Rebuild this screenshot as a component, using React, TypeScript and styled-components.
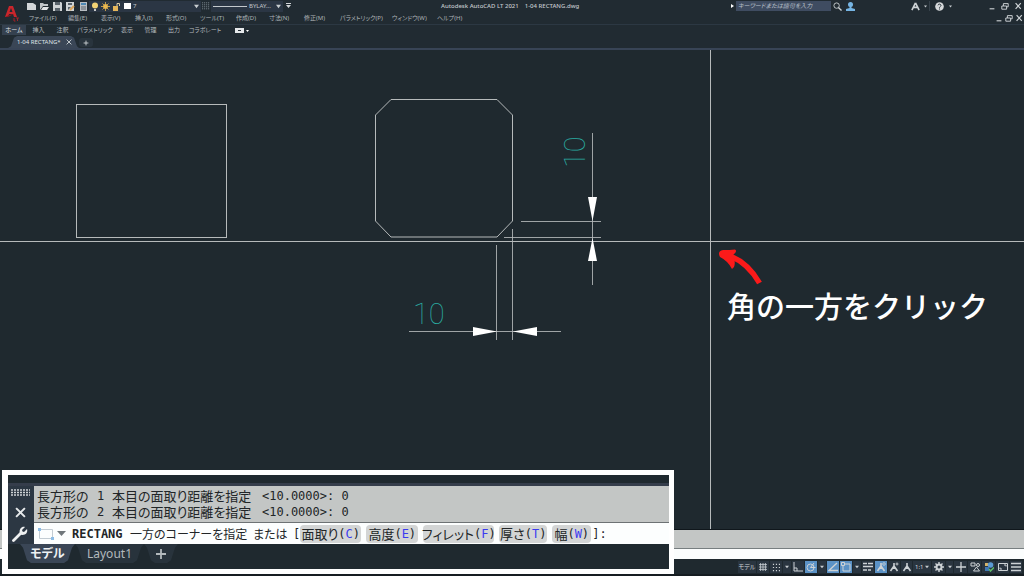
import React from 'react';
import styled, { createGlobalStyle } from 'styled-components';

const c = {
  bg: '#1f292f',
  chrome: '#212b32',
  rule: '#384456',
  tab: '#3a4656',
  active: '#5b92c6',
  text: '#c3c8cc',
  line: '#b6babb',
  gray: '#c3c6c5',
  teal: '#2aaba1',
};

const GlobalStyle = createGlobalStyle`
  * { box-sizing: border-box; }
  body {
    margin: 0;
    background: ${c.bg};
    color: ${c.text};
    font: 6px/10px "Noto Sans", "Noto Sans CJK JP", sans-serif;
    font-feature-settings: "palt";
  }
  button, input { font: inherit; font-feature-settings: inherit; color: inherit; border: 0; padding: 0; margin: 0; background: none; }
  svg { display: block; flex: none; }
`;

const Page = styled.div`
  position: relative;
  display: grid;
  grid-template-rows: auto 1fr auto auto;
  min-height: 100vh;
  overflow: hidden;
`;

const Header = styled.header`
  display: grid;
  grid-template-columns: 28px 1fr;
  background: ${c.chrome};
  border-bottom: 2px solid ${c.rule};
`;

const LogoButton = styled.button`
  grid-row: span 2;
  padding: 2px 0 0 5px;
`;

const Bar = styled.div`
  display: flex;
  align-items: center;
  height: 12px;
  justify-content: space-between;
`;

const Cluster = styled.div<{ $pad?: string }>`
  display: flex;
  align-items: center;
  padding: ${p => p.$pad ?? '0'};
`;

const IconButton = styled.button<{ $w?: number }>`
  display: flex;
  align-items: center;
  justify-content: center;
  width: ${p => p.$w ?? 13}px;
  height: 12px;
  flex: none;
`;

const Field = styled.button<{ $w: number; $ml?: number }>`
  display: flex;
  align-items: center;
  width: ${p => p.$w}px;
  height: 11px;
  margin-left: ${p => p.$ml ?? 0}px;
  padding: 0 2px;
  gap: 2px;
  background: #2b3644;
  & > :last-child { margin-left: auto; }
`;

const Title = styled.h1`
  flex: 1;
  display: flex;
  gap: 6px;
  margin: 0;
  padding-left: 148px;
  font-size: 6px;
  font-weight: 500;
  line-height: 12px;
  white-space: nowrap;
`;

const Search = styled.input`
  width: 95px;
  height: 10px;
  padding: 0 2px;
  background: #3f4c61;
  font-style: italic;
  &::placeholder { color: #b9c0ca; opacity: 1; }
`;

const Divider = styled.span`
  width: 1px;
  height: 10px;
  background: #37424b;
`;

const MenuItem = styled.button<{ $w: number }>`
  width: ${p => p.$w}px;
  text-align: left;
  white-space: nowrap;
  height: 12px;
  color: #adb3b7;
`;

const Ribbon = styled.nav`
  grid-column: 1 / -1;
  display: flex;
  height: 12px;
  padding-left: 2px;
  border-top: 1px solid #2c3843;
`;

const RibbonTab = styled.button<{ $w: number; $on?: boolean }>`
  width: ${p => p.$w}px;
  height: 10px;
  white-space: nowrap;
  background: ${p => (p.$on ? '#35414f' : 'none')};
  color: ${p => (p.$on ? '#e2e5e8' : '#b4babd')};
`;

const FileTabs = styled.div`
  grid-column: 1 / -1;
  display: flex;
  align-items: flex-end;
  height: 12px;
  padding-left: 8px;
`;

const FileTab = styled.button`
  display: flex;
  align-items: center;
  gap: 5px;
  height: 12px;
  width: 71px;
  padding-left: 9px;
  color: #dfe3e6;
  background: ${c.tab};
  clip-path: polygon(0 100%, 3px 85%, 6px 15%, 9px 0, 63px 0, 66px 15%, 69px 85%, 100% 100%);
`;

const AddTab = styled.button`
  display: grid;
  place-items: center;
  width: 14px;
  height: 9px;
  margin-bottom: 1px;
  border-radius: 3px;
  background: #29343d;
`;

const Canvas = styled.main`
  position: relative;
  min-height: 478px;
  border-bottom: 1px solid #10171c;
`;

const Drawing = styled.svg`
  position: absolute;
  inset: 0;
  width: 100%;
  height: 100%;
`;

const DimText = styled.text`
  font: 100 29px Roboto, "Noto Sans CJK JP", sans-serif;
  fill: ${c.teal};
`;

const Callout = styled.p`
  position: absolute;
  left: 727px;
  top: 234px;
  margin: 0;
  font: 500 29px/42px "Noto Sans CJK JP", sans-serif;
  font-feature-settings: normal;
  color: #fff;
  white-space: nowrap;
`;

const History = styled.div`
  height: 19px;
  background: ${c.gray};
  border-bottom: 1px solid #777e80;
`;

const Prompt = styled.div`
  height: 10px;
  background: #fbfdfd;
`;

const StatusBar = styled.footer`
  display: flex;
  align-items: center;
  justify-content: flex-end;
  gap: 1px;
  height: 17px;
  padding: 1px 2px 0 0;
  border-bottom: 2px solid #161d22;
`;

const StatusButton = styled.button<{ $w?: number; $on?: boolean }>`
  display: flex;
  align-items: center;
  justify-content: center;
  width: ${p => p.$w ?? 12}px;
  height: 12px;
  flex: none;
  white-space: nowrap;
  color: #d5dadd;
  background: ${p => (p.$on ? c.active : '#2a3540')};
`;

const Inset = styled.section`
  position: absolute;
  left: 2px;
  bottom: 2px;
  width: 672px;
  border: 6px solid #fff;
  border-width: 5px 5px 5px 6px;
  background: ${c.bg};
  color: #212527;
  padding-top: 8px;
`;

const Console = styled.div`
  display: grid;
  grid-template-columns: 26px 1fr;
  border-top: 3px solid #353d4b;
`;

const Grip = styled.div`
  display: flex;
  flex-direction: column;
  align-items: center;
  justify-content: space-between;
  padding: 3px 2px 4px 0;
  background: #2c3743;
`;

const Log = styled.div`
  height: 37px;
  padding: 2px 3px;
  background: ${c.gray};
  border-bottom: 1px solid #6d7274;
`;

const LogLine = styled.div`
  display: flex;
  font: 13px/16px "Noto Sans CJK JP", sans-serif;
  font-feature-settings: "palt";
  white-space: nowrap;
`;

const Part = styled.span<{ $w: number; $mono?: boolean; $small?: boolean }>`
  width: ${p => p.$w}px;
  flex: none;
  font-family: ${p => (p.$mono ? '"DejaVu Sans Mono"' : '"Noto Sans CJK JP"')}, monospace;
  font-size: ${p => (p.$mono || p.$small ? 12 : 13)}px;
  white-space: pre;
`;

const InputLine = styled.div`
  display: flex;
  align-items: center;
  height: 21px;
  padding-left: 3px;
  background: #fcfefe;
  font: 13px/16px "Noto Sans CJK JP", sans-serif;
  font-feature-settings: "palt";
  white-space: nowrap;
`;

const Command = styled.b`
  width: 58px;
  margin-left: 6px;
  font: 700 12px/16px "DejaVu Sans Mono", monospace;
`;

const Option = styled.button<{ $w: number }>`
  display: flex;
  justify-content: center;
  align-items: center;
  width: ${p => p.$w}px;
  height: 18px;
  margin-right: 5px;
  border-radius: 4px;
  background: #d3d5d5;
  &:nth-last-child(2) { margin-right: 1px; }
`;

const Mono = styled.span<{ $key?: boolean }>`
  font: 12px/16px "DejaVu Sans Mono", monospace;
  color: ${p => (p.$key ? '#3b3bf0' : 'inherit')};
`;

const Sheets = styled.div`
  display: flex;
  height: 25px;
  padding-left: 12px;
`;

const Sheet = styled.button<{ $w: number; $on?: boolean }>`
  display: grid;
  place-items: center;
  width: ${p => p.$w}px;
  height: 19px;
  font-size: 12px;
  line-height: 19px;
  font-weight: ${p => (p.$on ? 700 : 400)};
  color: ${p => (p.$on ? '#eef1f3' : '#b3b9bd')};
  background: ${p => (p.$on ? c.tab : '#28333c')};
  clip-path: polygon(0 0, 100% 0, calc(100% - 3px) 20%, calc(100% - 7px) 85%, calc(100% - 11px) 100%, 11px 100%, 7px 85%, 3px 20%);
`;

const Caret = ({ size = 5, color = '#c8cdd0' }: { size?: number; color?: string }) => (
  <svg width={size} height={size} viewBox="0 0 6 6"><path d="M0 1h6L3 5z" fill={color} /></svg>
);

const Glyph = ({ children, size = 10, sw = 1 }: { children: React.ReactNode; size?: number; sw?: number }) => (
  <svg width={size} height={size} viewBox="0 0 10 10" fill="none" stroke="#cdd2d5" strokeWidth={sw}>{children}</svg>
);

const WindowButtons = ({ w }: { w: number }) => (
  <>
    <IconButton $w={w} aria-label="最小化"><Glyph size={8}><path d="M2 8.500h6" strokeWidth="1.400" /></Glyph></IconButton>
    <IconButton $w={w} aria-label="元に戻す"><Glyph size={8}><path d="M1 5h6v4H1zM3 5V2h6v4H7" strokeWidth="1.200" /></Glyph></IconButton>
    <IconButton $w={w} aria-label="閉じる"><Glyph size={8}><path d="M2 1.500l6.500 7M8.500 1.500L2 8.500" strokeWidth="1.500" /></Glyph></IconButton>
  </>
);

const menus: [string, number][] = [
  ['ファイル(F)', 39], ['編集(E)', 33], ['表示(V)', 34], ['挿入(I)', 31], ['形式(O)', 34], ['ツール(T)', 36],
  ['作成(D)', 33], ['寸法(N)', 35], ['修正(M)', 36], ['パラメトリック(P)', 52], ['ウィンドウ(W)', 45], ['ヘルプ(H)', 30],
];

const ribbon: [string, number][] = [
  ['ホーム', 24], ['挿入', 25], ['注釈', 23], ['パラメトリック', 42], ['表示', 22], ['管理', 25], ['出力', 22], ['コラボレート', 40],
];

const options: [string, string, number][] = [
  ['面取り', 'C', 61], ['高度', 'E', 52], ['フィレット', 'F', 71], ['厚さ', 'T', 48], ['幅', 'W', 39],
];

const Person = ({ mark }: { mark?: 'ring' | 'plus' }) => (
  <Glyph>
    <path d="M5 1v3L1.500 9M5 4l3.500 5M5 3v4" strokeWidth="1.600" />
    {mark === 'ring' && <circle cx="8" cy="2" r="1.300" strokeWidth=".8" />}
    {mark === 'plus' && <path d="M8 .5v3M6.500 2h3" strokeWidth=".9" />}
  </Glyph>
);

export default function App() {
  return (
    <>
      <GlobalStyle />
      <Page lang="ja">
        <Header>
          <LogoButton aria-label="アプリケーション メニュー">
            <svg width="15" height="17" viewBox="0 0 15 17">
              <path d="M0 12L4 1h4l4 11H9L8 9H4l-1 3z" fill="#c9262c" />
              <path d="M4.500 7L6 3l1.500 4z" fill={c.chrome} />
              <path d="M0 12l4-2 5-1-6 3z" fill="#8d171d" />
              <path d="M9 13v3h1.500M11 13h3M12.500 13v3" stroke="#a52126" fill="none" />
            </svg>
          </LogoButton>
          <Bar>
            <Cluster>
              <IconButton $w={7} aria-label="新規作成">
                <svg width="9" height="9" viewBox="0 0 9 9"><path d="M0 1h6l3 2v5H0z" fill="#d3d6d8" /></svg>
              </IconButton>
              <IconButton $w={18} aria-label="開く">
                <svg width="9" height="9" viewBox="0 0 9 9"><path d="M0 8V1h3l1 1h4v2H3z" fill="#c1c5c8" /><path d="M3 5h6L7 8H1z" fill="#e2e4e6" /></svg>
              </IconButton>
              <IconButton $w={8} aria-label="上書き保存">
                <svg width="9" height="9" viewBox="0 0 9 9"><path d="M0 0h8l1 1v8H0z" fill="#cfd3d5" /><path d="M2 0v3h5V0M2 9V6h5v3" fill="#59636b" /></svg>
              </IconButton>
              <IconButton $w={18} aria-label="名前を付けて保存">
                <svg width="9" height="9" viewBox="0 0 9 9"><path d="M0 0h8v9H0z" fill="#cfd3d5" /><path d="M2 1v2h4V1M2 8V5h3" fill="#59636b" /><path d="M4 8l4-4" stroke="#d9a45a" strokeWidth="2" /></svg>
              </IconButton>
              <IconButton $w={8} aria-label="クラウドに保存">
                <svg width="7" height="9" viewBox="0 0 7 9"><path d="M0 0h7v9H0z" fill="#b8bec3" /><path d="M1 1h5v2H1z" fill="#4d89b5" /><path d="M1 5h5M1 7h5" stroke="#5b656e" /></svg>
              </IconButton>
              <Field $w={112} $ml={2} aria-label="画層">
                <svg width="8" height="9" viewBox="0 0 8 9"><circle cx="4" cy="3.500" r="3" fill="#f2d274" /><path d="M3 7h2v2H3z" fill="#c7c9ca" /></svg>
                <svg width="9" height="9" viewBox="0 0 9 9" stroke="#e8b54c"><circle cx="4.500" cy="4.500" r="2" fill="#f2c963" /><path d="M4.500 0v9M0 4.500h9M1.500 1.500l6 6M7.500 1.500l-6 6" strokeWidth=".8" /></svg>
                <svg width="9" height="9" viewBox="0 0 9 9"><path d="M1 4h5v5H1z" fill="#e6b65a" /><path d="M5 4V1.500h2.500V4" fill="none" stroke="#d9c9a0" /></svg>
                <svg width="8" height="8" viewBox="0 0 8 8"><path d="M1 1h7v6H1z" fill="#fff" /></svg>
                <span>7</span>
                <Caret />
              </Field>
              <IconButton $w={10} aria-label="画層プロパティ">
                <Glyph size={8}><path d="M0 1h10M0 3.500h10M0 6h10M0 8.500h10" strokeDasharray="1.500 1" stroke="#88929a" /></Glyph>
              </IconButton>
              <Field $w={72} aria-label="線種">
                <svg width="34" height="3"><path d="M0 1.500h34" stroke={c.text} /></svg>
                <span>BYLAY...</span>
                <Caret />
              </Field>
              <IconButton $w={10} aria-label="カスタマイズ">
                <svg width="5" height="6" viewBox="0 0 5 6"><path d="M0 0h5v1H0zM0 2h5L2.500 5z" fill="#d3d6d8" /></svg>
              </IconButton>
            </Cluster>
            <Title><span>Autodesk AutoCAD LT 2021</span><span>1-04 RECTANG.dwg</span></Title>
            <Cluster>
              <IconButton $w={8} aria-label="検索を展開"><svg width="3" height="4"><path d="M0 0l3 2-3 2z" fill="#fff" /></svg></IconButton>
              <Search type="text" aria-label="検索" placeholder="キーワードまたは語句を入力" />
              <IconButton aria-label="検索"><Glyph size={9}><circle cx="4" cy="4" r="3" /><path d="M6 6l3.500 3.500" strokeWidth="1.500" /></Glyph></IconButton>
              <IconButton aria-label="サインイン">
                <svg width="9" height="9" viewBox="0 0 9 9" fill="#76b5e4"><circle cx="4.500" cy="2.500" r="2.500" /><path d="M3.500 4h2v2L9 7v2H0V7l3.500-1z" /></svg>
              </IconButton>
            </Cluster>
            <Cluster $pad="0 0 0 53px">
              <IconButton $w={11} aria-label="App Store"><Glyph size={9}><path d="M5 1L1 9M5 1l4 8M2.500 6h5" strokeWidth="1.800" /></Glyph></IconButton>
              <IconButton $w={8} aria-label="メニュー"><Caret size={3} /></IconButton>
              <Divider />
              <IconButton $w={18} aria-label="ヘルプ"><svg width="9" height="9" viewBox="0 0 9 9"><circle cx="4.500" cy="4.500" r="4.300" fill="#d5d8da" /><path d="M3 3.300c.3-1.800 3-1.400 3 .2 0 1-1.500 1-1.500 2.200M4.500 6.500v1" stroke="#27323a" fill="none" /></svg></IconButton>
              <IconButton $w={5} aria-label="ヘルプ メニュー"><Caret size={3} /></IconButton>
            </Cluster>
            <Cluster $pad="0 0 0 32px"><WindowButtons w={13} /></Cluster>
          </Bar>
          <Bar>
            <Cluster $pad="0 0 0 1px">
              {menus.map(([label, w]) => <MenuItem key={label} $w={w}>{label}</MenuItem>)}
            </Cluster>
            <Cluster><WindowButtons w={10} /></Cluster>
          </Bar>
          <Ribbon>
            {ribbon.map(([label, w], i) => <RibbonTab key={label} $w={w} $on={i === 0}>{label}</RibbonTab>)}
            <IconButton $w={34} aria-label="リボン表示">
              <svg width="14" height="6" viewBox="0 0 14 6"><path d="M0 0h9v5H0z" fill="#e5e8ea" /><path d="M3 2h3v1H3z" fill={c.chrome} /><path d="M11 2h3l-1.500 2z" fill="#fff" /></svg>
            </IconButton>
          </Ribbon>
          <FileTabs>
            <FileTab>
              1-04 RECTANG*
              <Glyph size={6}><path d="M1 1l8 8M9 1L1 9" strokeWidth="1.500" /></Glyph>
            </FileTab>
            <AddTab aria-label="新規図面"><Glyph size={6}><path d="M5 1v8M1 5h8" strokeWidth="1.500" /></Glyph></AddTab>
          </FileTabs>
        </Header>

        <Canvas>
          <Drawing role="img" aria-label="長方形と面取りした長方形の図面">
            <g fill="none" stroke={c.line}>
              <rect x="76.500" y="54.500" width="150" height="133" />
              <path d="M391 49.500h106l15.500 15.500v106l-15.500 16H391l-15.500-16V65z" />
              <path d="M0 191.500h3000M710.500 0v2000" />
              <path d="M592.500 83v152M521 171.500h80M504 187.500h97" opacity=".85" />
              <path d="M496.500 195v95M512.500 179v111M409 281.500h152" opacity=".85" />
            </g>
            <path d="M588 147h9l-4.500 24zM588 211h9l-4.500-23zM473 277v9l24-4.500zM537 277v9l-24-4.500z" fill="#fff" />
            <DimText x="413" y="274">10</DimText>
            <DimText transform="translate(585 118) rotate(-90)">10</DimText>
            <path d="M759.500 233Q748 213 730 206" fill="none" stroke="#fb1a1a" strokeWidth="5.500" />
            <path d="M723 200Q730 200 735 199.500Q738 201 733 205Q736 212 734 217L732 219Q728 211 720 207Q717 201 723 200Z" fill="#fb1a1a" />
          </Drawing>
          <Callout>角の一方をクリック</Callout>
        </Canvas>

        <div>
          <History />
          <Prompt />
        </div>

        <StatusBar>
          <StatusButton $w={18}>モデル</StatusButton>
          <StatusButton aria-label="グリッド"><Glyph size={8}><path d="M2 0v10M5 0v10M8 0v10M0 2h10M0 5h10M0 8h10" /></Glyph></StatusButton>
          <StatusButton aria-label="スナップ"><Glyph size={9}><path d="M1 1.500h9M1 5h9M1 8.500h9" strokeDasharray="1.300 2" strokeWidth="1.300" /></Glyph></StatusButton>
          <StatusButton $w={8} aria-label="スナップ設定"><Caret size={4} /></StatusButton>
          <StatusButton aria-label="直交モード"><Glyph><path d="M1 0v9h9M1 6h3v3" /></Glyph></StatusButton>
          <StatusButton $on aria-label="極トラッキング"><Glyph><circle cx="4.500" cy="5.500" r="3.500" /><path d="M4.500 5.500h5M4.500 5.500L8 1" /></Glyph></StatusButton>
          <StatusButton $w={8} aria-label="極トラッキング設定"><Caret size={4} /></StatusButton>
          <StatusButton $on aria-label="スナップ トラッキング"><Glyph><path d="M9 1L1 8.500h9" strokeWidth="1.300" /></Glyph></StatusButton>
          <StatusButton $on aria-label="オブジェクト スナップ"><Glyph><path d="M4 2h5v7H2V4M.5 .5h3v3h-3z" /></Glyph></StatusButton>
          <StatusButton $w={8} aria-label="スナップ メニュー"><Caret size={4} /></StatusButton>
          <StatusButton aria-label="線の太さ"><Glyph><path d="M0 1.500h4M5 1.500h5M0 4.500h10M0 8h4M5 8h3" strokeWidth="1.600" /></Glyph></StatusButton>
          <StatusButton $on aria-label="注釈の表示"><Person mark="ring" /></StatusButton>
          <StatusButton aria-label="自動尺度"><Person mark="plus" /></StatusButton>
          <StatusButton $w={11} aria-label="注釈"><Person /></StatusButton>
          <StatusButton $w={18}>1:1&nbsp;<Caret size={4} /></StatusButton>
          <StatusButton $w={13} aria-label="ワークスペース"><Glyph><circle cx="5" cy="5" r="2.500" strokeWidth="2" /><path d="M5 0v2M5 8v2M0 5h2M8 5h2M1.500 1.500l1.500 1.500M7 7l1.500 1.500M8.500 1.500L7 3M3 7L1.500 8.500" strokeWidth="1.400" /></Glyph></StatusButton>
          <StatusButton $w={7} aria-label="ワークスペース メニュー"><Caret size={4} /></StatusButton>
          <StatusButton $w={13} aria-label="注釈モニター"><Glyph><path d="M5 0v10M0 5h10" strokeWidth="1.300" /></Glyph></StatusButton>
          <StatusButton $w={13} aria-label="選択表示"><Glyph><path d="M1 1h4v3H1zM6.500 5L9.500 9h-6z" /><circle cx="8" cy="3" r="1.500" /></Glyph></StatusButton>
          <StatusButton $w={13} aria-label="ハードウェア アクセラレーション"><svg width="10" height="10" viewBox="0 0 10 10"><path d="M1 1h3v3H1z" fill="#d8b567" /><circle cx="6.500" cy="3" r="2.800" fill="#5b9bd4" /><path d="M1 5h4v4H1z" fill="#3f79b5" /><path d="M5 7l1.500 2L10 5.500" stroke="#5fbf6a" strokeWidth="1.500" fill="none" /></svg></StatusButton>
          <StatusButton $w={13} aria-label="フルスクリーン"><Glyph><path d="M.5 1.500h9v7h-9zM2 5.500V7h2M6 3h2v1.500" /></Glyph></StatusButton>
          <StatusButton aria-label="カスタマイズ"><Glyph><path d="M0 1.500h10M0 5h10M0 8.500h10" strokeWidth="1.400" /></Glyph></StatusButton>
        </StatusBar>

        <Inset aria-label="コマンド ライン">
          <Console>
            <Grip>
              <svg width="19" height="7"><path d="M0 1h19M0 3.500h19M0 6h19" stroke="#cfd4d7" strokeWidth="1.500" strokeDasharray="2 1" /></svg>
              <IconButton aria-label="閉じる"><Glyph size={11}><path d="M1 1l8 8M9 1L1 9" strokeWidth="1.800" stroke="#e6e9eb" /></Glyph></IconButton>
              <IconButton $w={16} aria-label="カスタマイズ">
                <svg width="16" height="16" viewBox="0 0 16 16"><path d="M1.500 14.500L9 7" stroke="#eef0f1" strokeWidth="2.800" strokeLinecap="round" /><path d="M13 1L10 4l.5 1.500L12 6l3-3c1 3-1 6-4.500 6C7 9 6.500 3 10 1.200 11 .7 12 .6 13 1z" fill="#eef0f1" /></svg>
              </IconButton>
            </Grip>
            <div>
              <Log>
                {['1', '2'].map(n => (
                  <LogLine key={n}>
                    <Part $w={60}>長方形の</Part>
                    <Part $w={15} $mono>{n}</Part>
                    <Part $w={150}>本目の面取り距離を指定</Part>
                    <Part $w={90} $mono>{'<10.0000>: 0'}</Part>
                  </LogLine>
                ))}
              </Log>
              <InputLine>
                <svg width="18" height="14" viewBox="0 0 18 14"><path d="M2.500 2.500h13v9h-13z" fill="none" stroke="#c3ccd3" /><path d="M1 1h3v3H1zM14 10h3v3h-3z" fill="#8dbde6" /></svg>
                <svg width="11" height="5" viewBox="-2 0 11 5"><path d="M0 0h9L4.500 5z" fill="#70777b" /></svg>
                <Command>RECTANG</Command>
                <Part $w={123} $small>一方のコーナーを指定</Part>
                <Part $w={40} $small>または</Part>
                <Mono>[</Mono>
                {options.map(([label, key, w]) => (
                  <Option key={key} $w={w}>{label}<Mono>(</Mono><Mono $key>{key}</Mono><Mono>)</Mono></Option>
                ))}
                <Mono>]:</Mono>
              </InputLine>
            </div>
          </Console>
          <Sheets>
            <Sheet $w={55} $on>モデル</Sheet>
            <Sheet $w={69}>Layout1</Sheet>
            <Sheet $w={34} aria-label="新しいレイアウト"><Glyph><path d="M5 0v10M0 5h10" strokeWidth="1.800" stroke="#b3b9bd" /></Glyph></Sheet>
          </Sheets>
        </Inset>
      </Page>
    </>
  );
}
